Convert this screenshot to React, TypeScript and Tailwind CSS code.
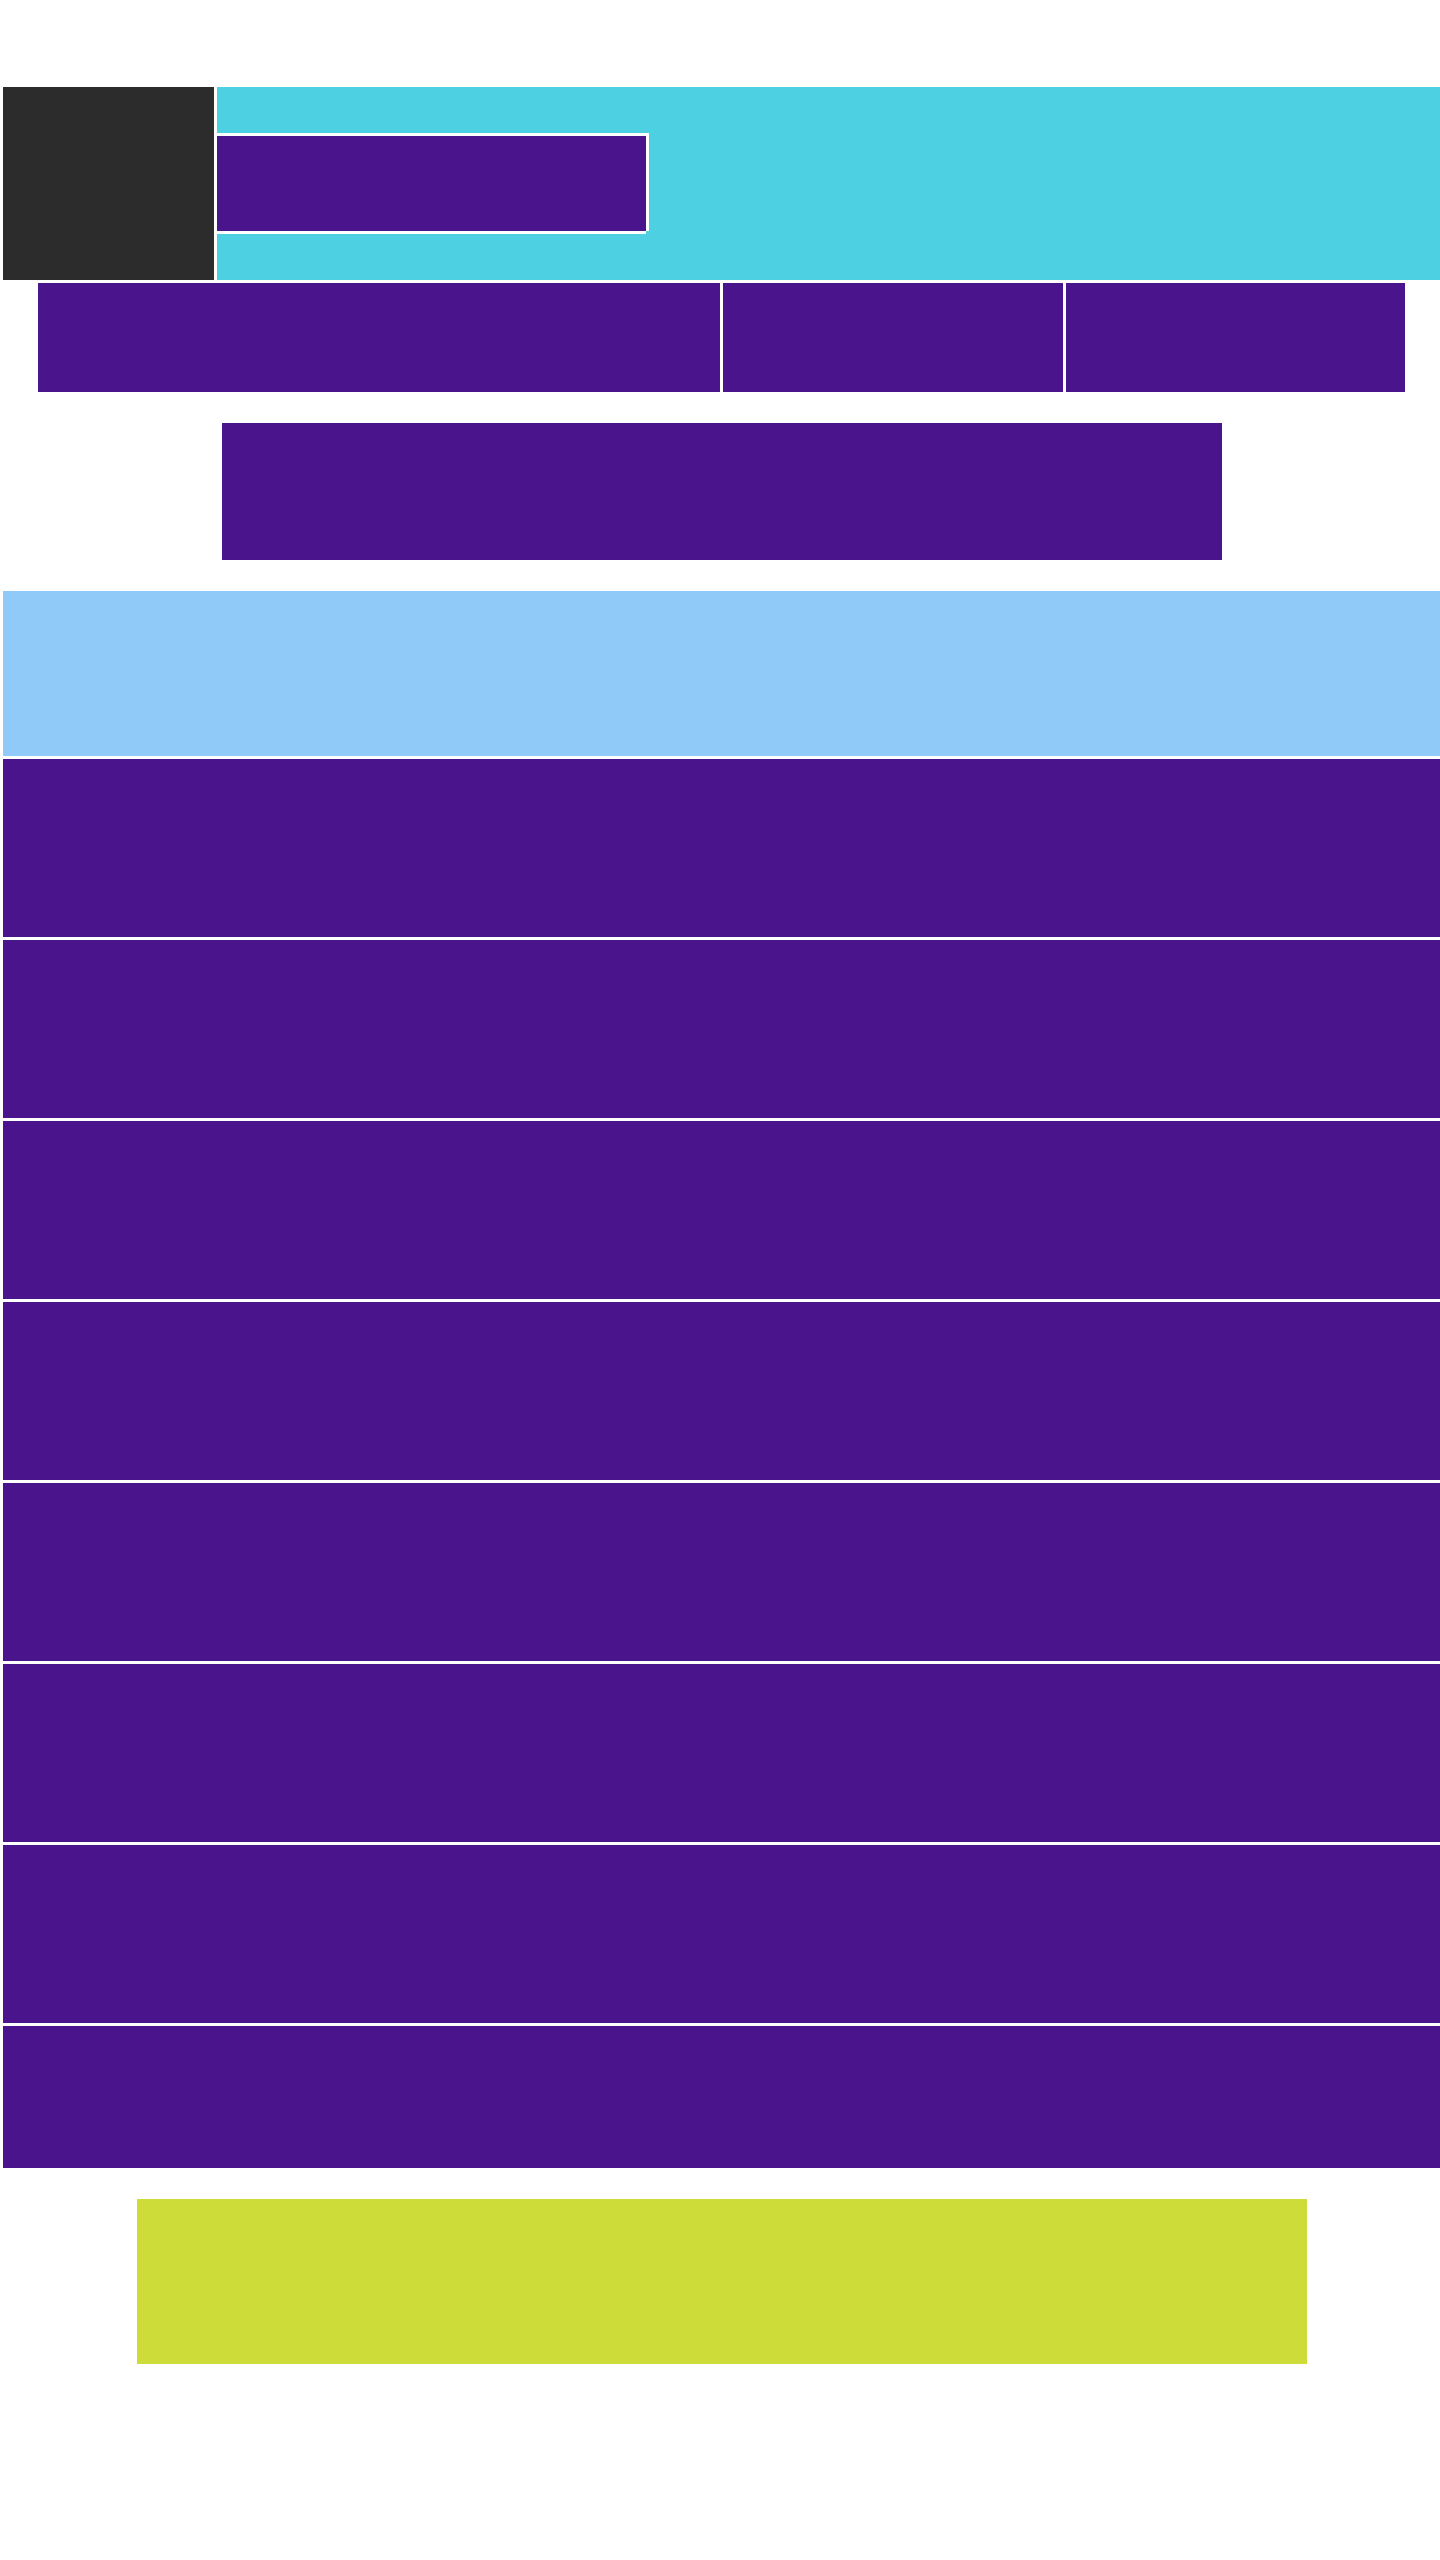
export default function App() {
  const rows = [0, 1, 2, 3, 4, 5, 6];

  return (
    <div className="min-h-[2560px] bg-white pt-[87px] pl-[3px] font-['Liberation_Sans',sans-serif]">
      <div className="flex w-[1437px] flex-col">
        {/* Header */}
        <div className="flex h-[193px] gap-[3px]">
          <div className="w-[211px] bg-[#2c2c2c]" />
          <div className="flex flex-1 items-center bg-[#4dd0e1]">
            <div className="h-[95px] w-[429px] bg-[#4a148c] shadow-[0_-3px_0_#fff,3px_-3px_0_#fff,3px_0_0_#fff,0_3px_0_#fff]" />
          </div>
        </div>

        {/* Nav */}
        <div className="mx-[35px] mt-[3px] grid h-[109px] grid-cols-4 gap-[3px]">
          <div className="col-span-2 bg-[#4a148c]" />
          <div className="bg-[#4a148c]" />
          <div className="bg-[#4a148c]" />
        </div>

        {/* Hero button */}
        <div className="mx-auto mt-[31px] h-[137px] w-[1000px] bg-[#4a148c]" />

        {/* Banner */}
        <div className="mt-[31px] h-[165px] bg-[#90caf9]" />

        {/* List */}
        <div className="mt-[3px] flex flex-col gap-[3px]">
          {rows.map((r) => (
            <div key={r} className="h-[178px] bg-[#4a148c]" />
          ))}
          <div className="h-[142px] bg-[#4a148c]" />
        </div>

        {/* Footer block */}
        <div className="mx-auto mt-[31px] h-[165px] w-[1170px] bg-[#cddc39]" />
      </div>
    </div>
  );
}
